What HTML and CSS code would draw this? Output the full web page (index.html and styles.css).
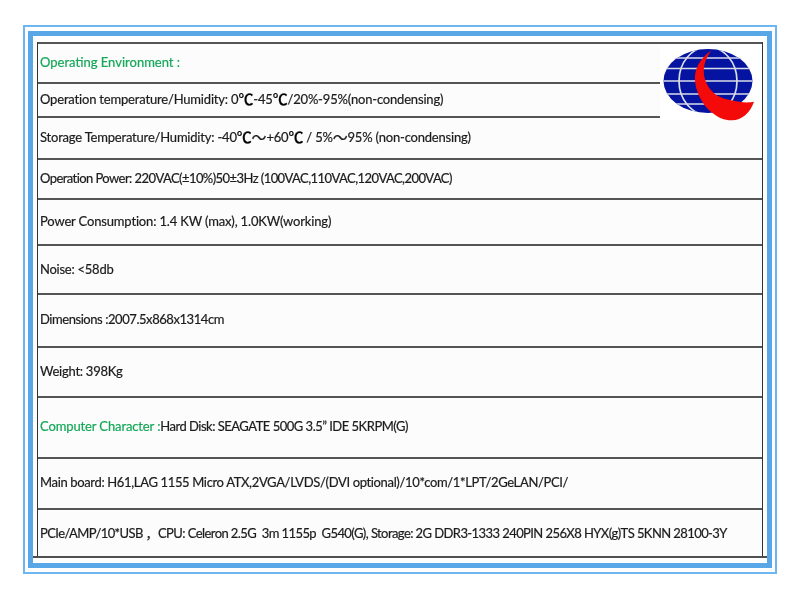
FILE: index.html
```html
<!DOCTYPE html>
<html lang="en">
<head>
<meta charset="utf-8">
<title>Specifications</title>
<link rel="stylesheet" href="styles.css">
</head>
<body>
<div class="frame">
  <div class="panel">
    <div class="sheet">
      <div class="spec">
        <div class="row"><span class="green">Operating Environment :</span></div>
        <div class="row tight-18">Operation temperature/Humidity: 0<span class="unit">℃</span>-45<span class="unit">℃</span>/20%-95%(non-condensing)</div>
        <div class="row tight-20">Storage Temperature/Humidity: -40<span class="unit">℃</span><span class="wave">～</span>+60<span class="unit">℃</span> / 5%<span class="wave">～</span>95% (non-condensing)</div>
        <div class="row tight-57">Operation Power: 220VAC(±10%)50±3Hz (100VAC,110VAC,120VAC,200VAC)</div>
        <div class="row tight-16">Power Consumption: 1.4 KW (max), 1.0KW(working)</div>
        <div class="row tight-25">Noise: &lt;58db</div>
        <div class="row tight-44">Dimensions :2007.5x868x1314cm</div>
        <div class="row tight-25">Weight: 398Kg</div>
        <div class="row tight-50"><span class="green green-loose">Computer Character :</span>Hard Disk: SEAGATE 500G 3.5” IDE 5KRPM(G)</div>
        <div class="row tight-35">Main board: H61,LAG 1155 Micro ATX,2VGA/LVDS/(DVI optional)/10*com/1*LPT/2GeLAN/PCI/</div>
        <div class="row tight-58">PCIe/AMP/10*USB ，CPU: Celeron 2.5G&nbsp; 3m 1155p&nbsp; G540(G), Storage: 2G DDR3-1333 240PIN 256X8 HYX(g)TS 5KNN 28100-3Y</div>
        <div class="logo">
          <svg width="102" height="78" viewBox="0 0 102 78" aria-label="Globe and crescent logo">
            <defs>
              <clipPath id="globe"><ellipse cx="48" cy="37" rx="44.5" ry="32"/></clipPath>
            </defs>
            <ellipse cx="48" cy="37" rx="44.5" ry="32" fill="#0414a0"/>
            <g clip-path="url(#globe)" fill="none" stroke="#d8dce8" stroke-width="1.700">
              <path d="M0 14H102M0 24.500H102M0 37H102M0 50H102M0 60H102"/>
              <ellipse cx="48" cy="37" rx="29" ry="34"/>
            </g>
            <path d="M51.700 6.300C39 15 34 26 35 37C36 48 42 60 50 67C58 74 65 76.500 72 76.300C82 76 90 69 94 57.700C88 59 81 58.500 75 57C67 55.500 60 54 55 50C49 45 45 38 44 31C43 22 46 13 51.700 6.300Z" fill="#f50a0a"/>
          </svg>
        </div>
      </div>
    </div>
  </div>
</div>
</body>
</html>
```

FILE: styles.css
```css
* {
  box-sizing: border-box;
}

html,
body {
  margin: 0;
  background: #ffffff;
}

body {
  width: 800px;
  height: 600px;
  padding: 25px 23px 0;
  font-family: Lato, "Noto Sans CJK SC", sans-serif;
  font-size: 13px;
  color: #1c1c1c;
  overflow: hidden;
}

.frame {
  width: 754px;
  height: 549px;
  border: 2px solid #6fb5ef;
  padding: 4px 3px;
}

.panel {
  height: 100%;
  border: 5px solid #58a8e8;
  padding-top: 6px;
  padding-bottom: 5px;
  background: #ffffff;
}

.sheet {
  padding: 0 4px;
  height: 100%;
  border-bottom: 2px solid #505050;
}

.spec {
  position: relative;
  height: 100%;
  display: grid;
  grid-template-columns: minmax(0, 1fr);
  grid-template-rows: 40px 33.5px 42px 40px 46.5px 49px 52.500px 50px 61px 51.500px 49px;
  background: #fcfcfc;
  border-left: 1.500px solid #333333;
  border-right: 1.500px solid #333333;
  filter: blur(0.25px);
}

.row {
  display: flex;
  align-items: center;
  padding: 0 0 2px 2px;
  white-space: pre;
  border-top: 2px solid #555555;
  -webkit-text-stroke: 0.2px;
}

.tight-16 {
  letter-spacing: -0.16px;
}

.tight-18 {
  letter-spacing: -0.18px;
}

.tight-20 {
  letter-spacing: -0.2px;
}

.tight-25 {
  letter-spacing: -0.25px;
}

.tight-35 {
  letter-spacing: -0.35px;
}

.tight-44 {
  letter-spacing: -0.44px;
}

.tight-50 {
  letter-spacing: -0.5px;
}

.tight-57 {
  letter-spacing: -0.57px;
}

.tight-58 {
  letter-spacing: -0.58px;
}

.green {
  color: #14a858;
}

.green-loose {
  letter-spacing: -0.12px;
}

.unit {
  font-size: 15px;
  font-weight: 500;
  color: #000000;
}

.wave {
  font-size: 15px;
}

.logo {
  position: absolute;
  top: 2px;
  right: 0;
  width: 102px;
  height: 76px;
  background: #ffffff;
}

.logo svg {
  display: block;
}
```
